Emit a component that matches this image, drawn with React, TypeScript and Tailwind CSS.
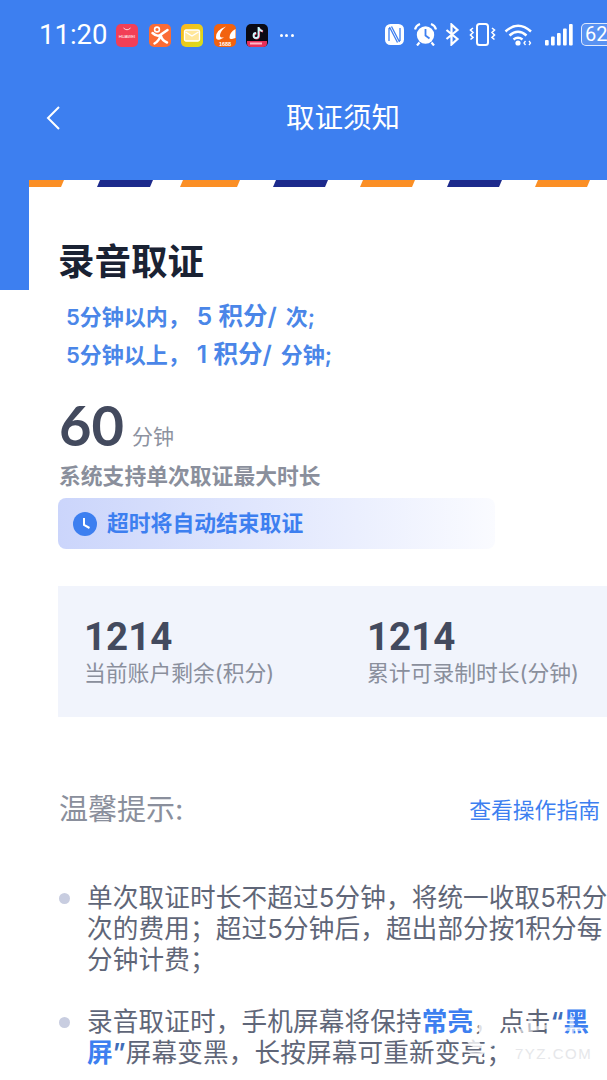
import React from 'react';

const cjk = "font-['Inter','Noto_Sans_CJK_SC',sans-serif]";

const Stripes = () => {
  const stripes = [
    { x: 29, w: 35, c: '#fb8f25' },
    { x: 97, w: 56, c: '#1d2a8c' },
    { x: 180, w: 60, c: '#fb8f25' },
    { x: 273, w: 55, c: '#1d2a8c' },
    { x: 360, w: 55, c: '#fb8f25' },
    { x: 447, w: 55, c: '#1d2a8c' },
    { x: 535, w: 55, c: '#fb8f25' },
  ];
  return (
    <svg width="578" height="8" viewBox="29 0 578 8" className="block">
      {stripes.map((s, i) => (
        <polygon
          key={i}
          fill={s.c}
          points={i === 0 ? `29,0 ${s.x + s.w},0 ${s.x + s.w - 3},7 29,7` : `${s.x + 3},0 ${s.x + s.w},0 ${s.x + s.w - 3},7 ${s.x},7`}
        />
      ))}
    </svg>
  );
};

const AppIcons = () => (
  <div className="flex items-center gap-[10.5px] ml-[9px]">
    <svg width="22" height="23" viewBox="0 0 22 23">
      <rect width="22" height="23" rx="5" fill="#f23f56" />
      <path d="M7.500 4q3.500 3.500 7 0" stroke="#fff" fill="none" strokeWidth="0.8" />
      <text x="11" y="14" fontSize="4.200" fill="#fff" textAnchor="middle" fontFamily="Liberation Sans, sans-serif">HUAWEI</text>
    </svg>
    <svg width="22" height="23" viewBox="0 0 22 23">
      <rect width="22" height="23" rx="5" fill="#fb6b35" />
      <circle cx="8" cy="5.500" r="2.400" fill="none" stroke="#fff" strokeWidth="1.600" />
      <path d="M3.500 9Q8.500 13.500 12 10.500L18.500 6" stroke="#fff" strokeWidth="2.500" fill="none" strokeLinecap="round" />
      <path d="M11.500 11.500Q10 17 5.500 19.500M12 12q1 4.500 6 6.500" stroke="#fff" strokeWidth="2.500" fill="none" strokeLinecap="round" />
    </svg>
    <svg width="22" height="23" viewBox="0 0 22 23">
      <defs>
        <linearGradient id="mailg" x1="0" y1="0" x2="1" y2="1">
          <stop offset="0" stopColor="#ffb51f" />
          <stop offset="1" stopColor="#d5e01a" />
        </linearGradient>
      </defs>
      <rect width="22" height="23" rx="5" fill="url(#mailg)" />
      <rect x="3.500" y="6" width="15" height="11" rx="1.500" fill="#ffe79a" stroke="#fff" strokeWidth="1.300" />
      <path d="M4.500 8l6.500 4 6.500-4" stroke="#fff" strokeWidth="1.300" fill="none" />
    </svg>
    <svg width="22" height="23" viewBox="0 0 22 23">
      <rect width="22" height="23" rx="5" fill="#f2620f" />
      <path d="M12 2.500Q2 6 2 13q0 3.500 4 2.500l4-2Q5.500 14 6 11q.5-4 6-8.500zM21.500 5q-6 3.500-6 8.500 0 2 2.500 1.500l3.500-1z" fill="#fff" />
      <text x="11" y="21.500" fontSize="5.500" fontWeight="700" fill="#fff" textAnchor="middle" fontFamily="Liberation Sans, sans-serif">1688</text>
    </svg>
    <svg width="22" height="23" viewBox="0 0 22 23">
      <rect width="22" height="23" rx="5" fill="#0a0a14" />
      <path d="M12.500 3v8.500a2.500 2.500 0 1 1-2.500-2.500M12.500 3.500q1 3 4 3.500" stroke="#ff3a5e" strokeWidth="1.800" fill="none" transform="translate(.6 .5)" />
      <path d="M12.500 3v8.500a2.500 2.500 0 1 1-2.500-2.500M12.500 3.500q1 3 4 3.500" stroke="#c8fbff" strokeWidth="1.800" fill="none" />
      <path d="M1 17h20v2q0 4-4 4H5q-4 0-4-4z" fill="#e6305a" />
      <rect x="4" y="18.500" width="12" height="2" fill="#ffb9c8" />
    </svg>
    <div className="flex gap-[2.5px] ml-[1px]">
      <span className="w-[3px] h-[3px] rounded-full bg-white" />
      <span className="w-[3px] h-[3px] rounded-full bg-white" />
      <span className="w-[3px] h-[3px] rounded-full bg-white" />
    </div>
  </div>
);

const StatusRight = () => (
  <div className="flex items-center absolute left-[384px] top-[22px] h-[24px]">
    {/* NFC */}
    <svg width="21" height="23" viewBox="0 0 21 23" fill="none">
      <rect x="1" y="1" width="19" height="21" rx="5.500" fill="#fff" />
      <path d="M5 5v13M16 5v13M7.500 3.500l8 15.500M5.500 4l8 15.500" stroke="#3d7ff0" strokeWidth="1.300" />
    </svg>
    {/* alarm */}
    <svg width="23" height="23" viewBox="0 0 23 23" className="ml-[9px]">
      <circle cx="11.500" cy="12" r="8.700" fill="#fff" />
      <path d="M11.500 6v6.500l4 3" stroke="#3d7ff0" strokeWidth="1.800" fill="none" />
      <path d="M1 6.500q1-4 5-5.500M22 6.500q-1-4-5-5.500M5.500 19.500l-2.500 3M17.500 19.500l2.500 3" stroke="#fff" strokeWidth="2.200" fill="none" />
    </svg>
    {/* bluetooth */}
    <svg width="15" height="23" viewBox="0 0 15 23" className="ml-[8px]" fill="none" stroke="#fff" strokeWidth="2.200">
      <path d="M1.500 7l11 9-6 5.500V1.500l6 5.500-11 9" />
    </svg>
    {/* vibrate */}
    <svg width="27" height="23" viewBox="0 0 27 23" className="ml-[9px]" fill="none" stroke="#fff" strokeWidth="2">
      <rect x="8" y="1" width="11" height="21" rx="2.500" />
      <path d="M4 5l-2.500 2 2.500 2.500-2.500 2.500 2.500 2.500-2.500 2M23 5l2.500 2-2.500 2.500 2.500 2.500-2.500 2.500 2.500 2" strokeWidth="1.600" />
    </svg>
    {/* wifi */}
    <svg width="30" height="23" viewBox="0 0 30 23" className="ml-[8px]" fill="none" stroke="#fff" strokeWidth="2.500">
      <path d="M1.500 8.500Q14-3 27 8.500M5.500 12.500q8.500-7.500 17 0M9.500 16.500q4.500-3.500 9 0" />
      <circle cx="14" cy="20" r="2.600" fill="#fff" stroke="none" />
      <path d="M21.500 18l-1.500 2 1.500 2M25 18l1.500 2-1.500 2" strokeWidth="1.300" />
    </svg>
    {/* signal */}
    <svg width="29" height="23" viewBox="0 0 29 23" className="ml-[10px]" fill="#fff">
      <rect x="1" y="17" width="3.700" height="5.500" rx="1" />
      <rect x="7" y="13.500" width="3.700" height="9" rx="1" />
      <rect x="13" y="10" width="3.700" height="12.500" rx="1" />
      <rect x="19" y="5.500" width="3.700" height="17" rx="1" />
      <rect x="25" y="1" width="3.700" height="21.500" rx="1" />
    </svg>
    {/* battery */}
    <div className="ml-[8px] w-[40px] h-[23px] shrink-0 rounded-[5px] border-[1.500px] border-white/80 bg-white/15 flex items-center pl-[3px] text-white text-[20px] leading-none font-['Roboto',sans-serif]">
      62
    </div>
  </div>
);

const Stat = ({ value, label }: { value: string; label: string }) => (
  <div>
    <div className="font-['Roboto',sans-serif] font-bold text-[38.500px] leading-[42px] text-[#434a5e]">{value}</div>
    <div className="text-[21.800px] leading-[30px] text-[#8a8f9c] whitespace-nowrap">{label}</div>
  </div>
);

const App = () => {
  return (
    <div className={`relative w-[607px] h-[1080px] overflow-hidden bg-white ${cjk}`}>
      <div className="relative h-[180px] bg-[#3d7ff0]">
        <div className="flex items-center pl-[39px] pt-[20px] h-[50px]">
          <span className="font-['Roboto',sans-serif] text-[27.500px] leading-none text-white">11:20</span>
          <AppIcons />
        </div>
        <StatusRight />
        <div className="flex items-center pl-[46px] mt-[46px] h-[44px]">
          <svg width="14" height="24" viewBox="0 0 14 24" fill="none" stroke="#fff" strokeWidth="2">
            <path d="M13 1L2 12l11 11" />
          </svg>
          <span className="ml-[226px] text-[28.500px] text-white leading-none whitespace-nowrap">取证须知</span>
        </div>
      </div>

      <div className="flex">
        <div className="w-[29px] h-[110px] bg-[#3d7ff0] shrink-0" />
        <div className="flex-1 min-w-0">
          <Stripes />
          <div className="pl-[30px]">
            <h1 className="-ml-[1px] mt-[50px] text-[36.500px] leading-[48px] font-bold text-[#1a2233] whitespace-nowrap">录音取证</h1>

            <div className="mt-[12px] pl-[7px] text-[#4a86e8] font-semibold text-[22px] whitespace-nowrap">
              <div className="h-[38px] flex items-baseline">
                <span>5分钟以内，</span>
                <span className="ml-[7px] text-[24.500px]">5 积分/</span>
                <span className="ml-[9px]">次;</span>
              </div>
              <div className="h-[38px] flex items-baseline">
                <span>5分钟以上，</span>
                <span className="ml-[7px] text-[24.500px]">1 积分/</span>
                <span className="ml-[9px]">分钟;</span>
              </div>
            </div>

            <div className="mt-[17px] flex items-baseline">
              <span className="font-['Lato',sans-serif] font-bold text-[56px] leading-[68px] text-[#434a5e]">60</span>
              <span className="ml-[8px] text-[21px] text-[#8d92a0] -translate-y-[2px]">分钟</span>
            </div>
            <div className="-mt-[1px] text-[21.800px] leading-[36px] font-semibold text-[#8a8f9c] whitespace-nowrap">
              系统支持单次取证最大时长
            </div>

            <div className="-ml-[1px] mt-[4px] w-[437px] h-[51px] rounded-[8px] bg-gradient-to-r from-[#cbd5fb] to-[#fafbff] flex items-center pl-[15px]">
              <svg width="24" height="24" viewBox="0 0 24 24">
                <circle cx="12" cy="12" r="12" fill="#3d7ff0" />
                <path d="M11 6v7l5.500 3" stroke="#fff" strokeWidth="2" fill="none" />
              </svg>
              <span className="ml-[10px] text-[21.800px] font-semibold text-[#3d7ff0] whitespace-nowrap">超时将自动结束取证</span>
            </div>

            <div className="-ml-[1px] mt-[37px] h-[131px] bg-[#f1f4fc] grid grid-cols-[283px_1fr] items-center pl-[26px]">
              <Stat value="1214" label="当前账户剩余(积分)" />
              <Stat value="1214" label="累计可录制时长(分钟)" />
            </div>

            <div className="mt-[73px] flex items-center justify-between pr-[7px] h-[40px]">
              <span className="text-[29px] text-[#8a8f9c] whitespace-nowrap">温馨提示:</span>
              <span className="text-[21.800px] text-[#3d7ff0] whitespace-nowrap">查看操作指南</span>
            </div>

            <div className="mt-[52px] flex flex-col gap-[31px] text-[25.600px] tracking-[0.15px] leading-[31px] text-[#5f6678] whitespace-nowrap">
              <div className="flex">
                <span className="mt-[11px] w-[11px] h-[11px] rounded-full bg-[#c8cde0] shrink-0" />
                <p className="ml-[17px]">
                  单次取证时长不超过5分钟，将统一收取5积分
                  <br />
                  次的费用；超过5分钟后，超出部分按1积分每
                  <br />
                  分钟计费；
                </p>
              </div>
              <div className="flex">
                <span className="mt-[11px] w-[11px] h-[11px] rounded-full bg-[#c8cde0] shrink-0" />
                <p className="ml-[17px]">
                  录音取证时，手机屏幕将保持<span className="text-[#3d7ff0] font-semibold">常亮</span>，点击<span className="text-[#3f6db8] font-semibold">“</span><span className="text-[#3d7ff0] font-semibold">黑</span>
                  <br />
                  <span className="text-[#3d7ff0] font-semibold">屏</span><span className="text-[#3f6db8] font-semibold">”</span>屏幕变黑，长按屏幕可重新变亮；
                </p>
              </div>
            </div>
          </div>
        </div>
      </div>

      {/* watermark */}
      <div className="absolute left-[460px] top-[1010px] w-[135px] h-[60px] pointer-events-none">
        <svg width="44" height="52" viewBox="0 0 44 52" className="absolute left-[0px] top-[2px]" fill="#fff" opacity="0.8">
          <path d="M22 2q12 12 2 28-10-12-2-28zM4 22q14 0 18 14Q8 38 4 22zM40 20q-14 4-14 16 12 0 14-16zM8 40q14 2 18-2-6 12-18 2z" />
        </svg>
        <span className="absolute left-[58px] top-[3px] text-[32px] leading-[40px] font-bold text-white/60 whitespace-nowrap">七叶</span>
        <span className="absolute left-[55px] top-[34px] text-[15px] leading-[20px] tracking-[1.500px] text-[#e6e7ea] whitespace-nowrap font-['Liberation_Sans',sans-serif]">7YZ.COM</span>
      </div>
    </div>
  );
};

export default App;
